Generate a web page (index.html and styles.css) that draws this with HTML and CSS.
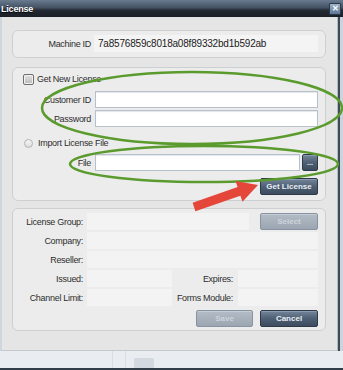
FILE: index.html
```html
<!DOCTYPE html>
<html lang="en">
<head>
    <meta charset="UTF-8">
    <meta name="viewport" content="width=device-width, initial-scale=1.0">
    <title>License</title>
    <link rel="stylesheet" href="styles.css">
</head>
<body>
    <div class="window">
        <header class="titlebar">
            <span class="title">License</span>
            <span class="close">&#x2715;</span>
        </header>

        <div class="frame">
            <div class="dialog">
                <section class="group machine">
                    <label class="lbl">Machine ID</label>
                    <div class="value">7a8576859c8018a08f89332bd1b592ab</div>
                </section>

                <section class="group acquire">
                    <div class="option">
                        <span class="checkbox"></span>
                        <span>Get New License</span>
                    </div>
                    <div class="row first">
                        <label class="lbl">Customer ID</label>
                        <div class="input"></div>
                    </div>
                    <div class="row">
                        <label class="lbl">Password</label>
                        <div class="input"></div>
                    </div>
                    <div class="option import">
                        <span class="radio"></span>
                        <span>Import License File</span>
                    </div>
                    <div class="row file">
                        <label class="lbl">File</label>
                        <div class="input"></div>
                        <button class="btn browse">...</button>
                    </div>
                    <div class="actions get">
                        <button class="btn">Get License</button>
                    </div>
                </section>

                <section class="group details">
                    <div class="row">
                        <label class="lbl">License Group:</label>
                        <div class="field group-field"></div>
                        <button class="btn disabled select">Select</button>
                    </div>
                    <div class="row">
                        <label class="lbl">Company:</label>
                        <div class="field"></div>
                    </div>
                    <div class="row">
                        <label class="lbl">Reseller:</label>
                        <div class="field"></div>
                    </div>
                    <div class="row">
                        <label class="lbl">Issued:</label>
                        <div class="field short"></div>
                        <label class="lbl right">Expires:</label>
                        <div class="field"></div>
                    </div>
                    <div class="row">
                        <label class="lbl">Channel Limit:</label>
                        <div class="field short"></div>
                        <label class="lbl right">Forms Module:</label>
                        <div class="field"></div>
                    </div>
                    <div class="actions">
                        <button class="btn disabled save">Save</button>
                        <button class="btn cancel">Cancel</button>
                    </div>
                </section>
            </div>
            <div class="edge"></div>
        </div>

        <footer class="taskbar">
            <span class="sep"></span>
            <span class="tray"></span>
        </footer>

        <!-- annotations drawn over the screenshot -->
        <svg class="marks" width="343" height="370" viewBox="0 0 343 370">
            <ellipse cx="192" cy="108" rx="150" ry="36" fill="none" stroke="#5b9b2e" stroke-width="2.5"/>
            <ellipse cx="204" cy="164" rx="134" ry="18" fill="none" stroke="#5b9b2e" stroke-width="2.5"/>
            <polygon fill="#e5463a" points="192.6,202.7 237.6,187.1 235.5,181 258,185 242.5,201.8 240.4,195.7 195.4,211.3"/>
        </svg>
    </div>
</body>
</html>
```

FILE: styles.css
```css
* {
    margin: 0;
    padding: 0;
    box-sizing: border-box;
}

body {
    background: #e9edf1;
    font-family: 'Liberation Sans', Arial, sans-serif;
    color: #2e2e2e;
}

.window {
    position: relative;
    width: 343px;
    height: 370px;
    overflow: hidden;
}

.titlebar {
    height: 17px;
    display: flex;
    align-items: center;
    justify-content: space-between;
    padding: 0 2px 0 1px;
    background: linear-gradient(to bottom, #6a7b90 0%, #435163 45%, #232a33 60%, #1b2027 100%);
}

.title {
    color: #fff;
    font-size: 9px;
    font-weight: bold;
    letter-spacing: -0.2px;
    text-shadow: 0 1px 1px #000;
}

.close {
    width: 12px;
    height: 12px;
    border: 1px solid #2b3a4b;
    border-radius: 1px;
    background: linear-gradient(#9fb3c9, #5d7694);
    color: #fff;
    font-size: 8px;
    font-weight: bold;
    line-height: 10px;
    text-align: center;
}

.frame {
    display: flex;
    height: 334px;
}

.dialog {
    width: 337px;
    height: 334px;
    background: #e5e5e5;
    border-left: 2px solid #cfd6de;
    border-bottom: 1px solid #c3c8cd;
    padding: 13px 11px 0 10px;
}

.edge {
    flex: 1;
    background: #3d4a58;
    border-left: 1px solid #b5bbc1;
    border-right: 3px solid #cbd4de;
}

.group {
    background: #ececec;
    border: 1px solid #cdd0d3;
    border-radius: 6px;
}

.lbl {
    flex: none;
    text-align: right;
    font-size: 9px;
    letter-spacing: -0.3px;
    color: #2e2e2e;
}

/* machine id */
.machine {
    display: flex;
    align-items: center;
    height: 28px;
    padding: 4px 7px 5px 0;
}

.machine .lbl {
    width: 78px;
    margin-right: 3px;
}

.value {
    flex: 1;
    height: 17px;
    background: #f4f4f4;
    font-size: 10px;
    letter-spacing: -0.2px;
    line-height: 17px;
    padding-left: 4px;
    color: #222;
}

/* get / import license */
.acquire {
    margin-top: 9px;
    padding: 4px 7px 5px 0;
}

.option {
    display: flex;
    align-items: center;
    height: 14px;
    margin-left: 10px;
    font-size: 9px;
    letter-spacing: -0.3px;
    color: #2e2e2e;
}

.checkbox {
    width: 11px;
    height: 11px;
    margin-right: 3px;
    border: 1px solid #6e6e6e;
    border-radius: 2px;
    background: linear-gradient(#e4e4e4, #b9b9b9);
    box-shadow: inset 0 0 0 1px #f2f2f2;
}

.radio {
    width: 9px;
    height: 9px;
    margin: 0 5px 0 1px;
    border: 1px solid #b3b3b3;
    border-radius: 50%;
    background: linear-gradient(#f6f6f6, #dcdcdc);
}

.row {
    display: flex;
    align-items: center;
    height: 17px;
    margin-top: 2px;
}

.acquire .lbl {
    width: 78px;
    margin-right: 4px;
}

.acquire .row.first {
    margin-top: 5px;
}

.acquire .option.import {
    margin-top: 9px;
}

.acquire .row.file {
    margin-top: 4px;
}

.input {
    flex: 1;
    height: 17px;
    background: #fff;
    border: 1px solid #b7c1cb;
    box-shadow: inset 0 1px 1px #e3e7eb;
}

.btn {
    height: 17px;
    border: 1px solid #2e3a47;
    border-radius: 2px;
    background: linear-gradient(#73859a, #4f6075 50%, #3d4c5e);
    color: #e9eef4;
    font-family: 'Liberation Sans', Arial, sans-serif;
    font-size: 8px;
    font-weight: bold;
    box-shadow: inset 0 1px 0 #8b9cb0;
}

.browse {
    width: 16px;
    margin-left: 2px;
    font-size: 7px;
    line-height: 8px;
}

.actions {
    display: flex;
    justify-content: flex-end;
    gap: 7px;
    margin-top: 4px;
}

.actions.get {
    margin-top: 7px;
}

.actions .btn {
    width: 58px;
}

.btn.disabled {
    border-color: #8793a0;
    background: linear-gradient(#b3bcc6, #9ba6b2);
    color: #cdd3da;
    box-shadow: inset 0 1px 0 #c4ccd5;
}

.actions .save {
    width: 57px;
}

/* license details */
.details {
    margin-top: 7px;
    padding: 4px 7px 3px 0;
}

.details .row:first-child {
    margin-top: 0;
}

.details .lbl {
    width: 70px;
    margin-right: 4px;
}

.details .lbl.right {
    width: 57px;
    margin: 0 5px 0 4px;
}

.field {
    flex: 1;
    height: 17px;
    background: #f3f3f3;
}

.field.group-field {
    flex: none;
    width: 162px;
}

.field.short {
    flex: none;
    width: 85px;
}

.select {
    width: 58px;
    margin-left: auto;
}

/* bottom strip behind the dialog */
.taskbar {
    display: flex;
    height: 19px;
    padding-left: 112px;
    background: #e9edf1;
    border-bottom: 2px solid #323d4a;
}

.sep {
    width: 14px;
    border-left: 1px solid #d8dee4;
    border-right: 1px solid #d8dee4;
}

.tray {
    width: 20px;
    height: 10px;
    margin: 7px 0 0 8px;
    border-radius: 2px 2px 0 0;
    background: #d3d9e0;
}

.marks {
    position: absolute;
    top: 0;
    left: 0;
    pointer-events: none;
}
```
